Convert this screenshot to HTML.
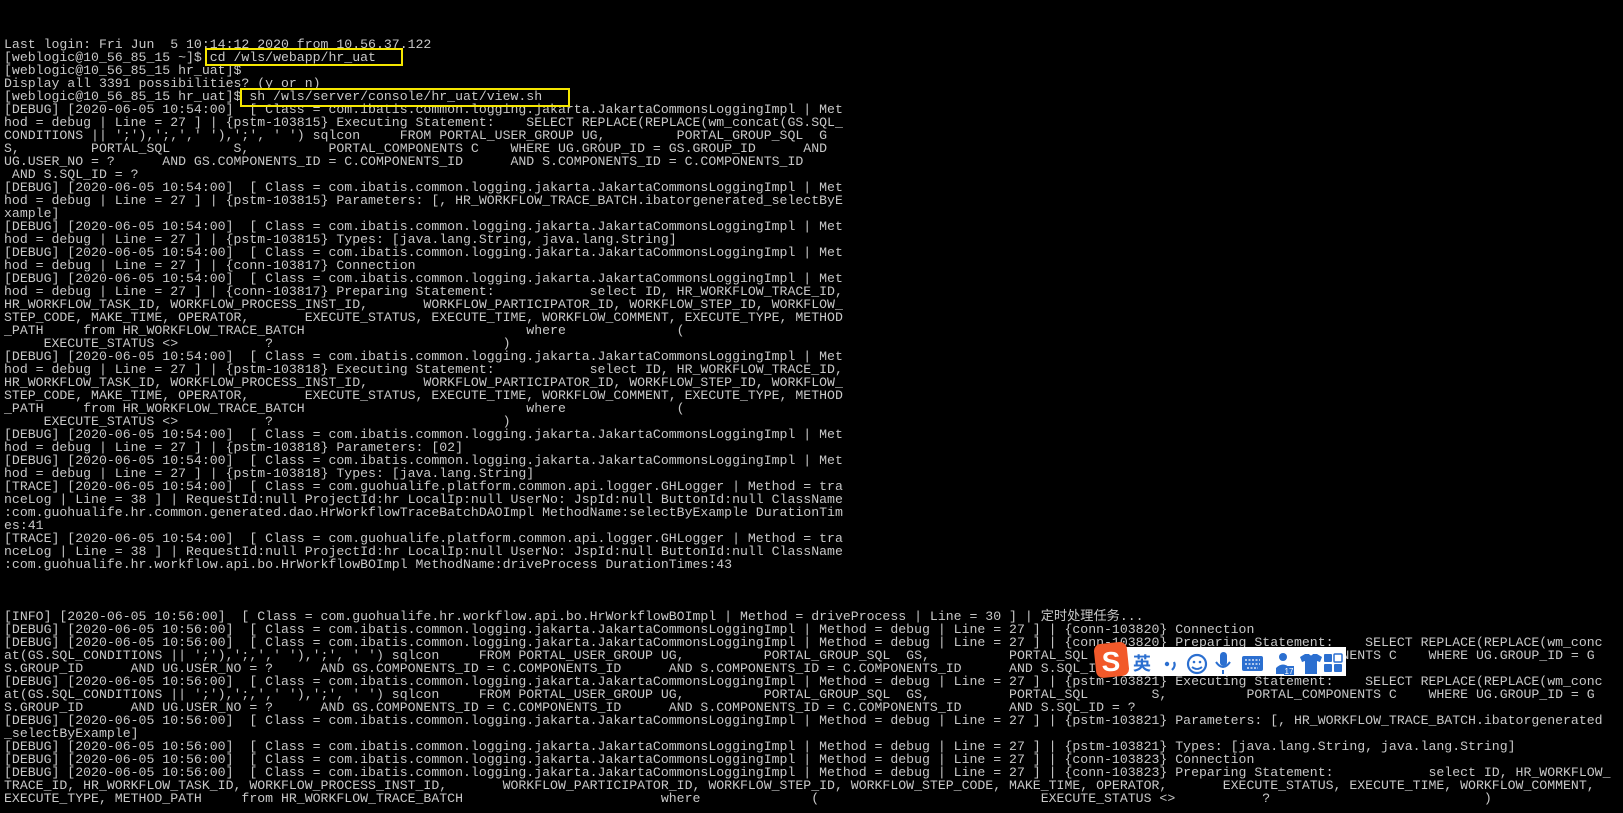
<!DOCTYPE html>
<html><head><meta charset="utf-8">
<style>
html,body{margin:0;padding:0;background:#000;width:1623px;height:813px;overflow:hidden;position:relative}
pre{position:absolute;left:4px;top:38px;margin:0;font-family:"Liberation Mono","Noto Sans CJK SC",monospace;font-size:13.2px;line-height:13px;color:#c8c8c8;white-space:pre}
.box{position:absolute;border:2px solid #f5e600;box-sizing:border-box}
.ime{position:absolute;left:1118px;top:647px;width:228px;height:29px;background:#fff}
.ic{position:absolute}
</style></head><body>
<pre>Last login: Fri Jun  5 10:14:12 2020 from 10.56.37.122
[weblogic@10_56_85_15 ~]$ cd /wls/webapp/hr_uat
[weblogic@10_56_85_15 hr_uat]$
Display all 3391 possibilities? (y or n)
[weblogic@10_56_85_15 hr_uat]$ sh /wls/server/console/hr_uat/view.sh
[DEBUG] [2020-06-05 10:54:00]  [ Class = com.ibatis.common.logging.jakarta.JakartaCommonsLoggingImpl | Met
hod = debug | Line = 27 ] | {pstm-103815} Executing Statement:    SELECT REPLACE(REPLACE(wm_concat(GS.SQL_
CONDITIONS || ';'),';,',' '),';', ' ') sqlcon     FROM PORTAL_USER_GROUP UG,         PORTAL_GROUP_SQL  G
S,         PORTAL_SQL        S,          PORTAL_COMPONENTS C    WHERE UG.GROUP_ID = GS.GROUP_ID      AND
UG.USER_NO = ?      AND GS.COMPONENTS_ID = C.COMPONENTS_ID      AND S.COMPONENTS_ID = C.COMPONENTS_ID
 AND S.SQL_ID = ?
[DEBUG] [2020-06-05 10:54:00]  [ Class = com.ibatis.common.logging.jakarta.JakartaCommonsLoggingImpl | Met
hod = debug | Line = 27 ] | {pstm-103815} Parameters: [, HR_WORKFLOW_TRACE_BATCH.ibatorgenerated_selectByE
xample]
[DEBUG] [2020-06-05 10:54:00]  [ Class = com.ibatis.common.logging.jakarta.JakartaCommonsLoggingImpl | Met
hod = debug | Line = 27 ] | {pstm-103815} Types: [java.lang.String, java.lang.String]
[DEBUG] [2020-06-05 10:54:00]  [ Class = com.ibatis.common.logging.jakarta.JakartaCommonsLoggingImpl | Met
hod = debug | Line = 27 ] | {conn-103817} Connection
[DEBUG] [2020-06-05 10:54:00]  [ Class = com.ibatis.common.logging.jakarta.JakartaCommonsLoggingImpl | Met
hod = debug | Line = 27 ] | {conn-103817} Preparing Statement:            select ID, HR_WORKFLOW_TRACE_ID,
HR_WORKFLOW_TASK_ID, WORKFLOW_PROCESS_INST_ID,       WORKFLOW_PARTICIPATOR_ID, WORKFLOW_STEP_ID, WORKFLOW_
STEP_CODE, MAKE_TIME, OPERATOR,       EXECUTE_STATUS, EXECUTE_TIME, WORKFLOW_COMMENT, EXECUTE_TYPE, METHOD
_PATH     from HR_WORKFLOW_TRACE_BATCH                            where              (
     EXECUTE_STATUS &lt;&gt;           ?                             )
[DEBUG] [2020-06-05 10:54:00]  [ Class = com.ibatis.common.logging.jakarta.JakartaCommonsLoggingImpl | Met
hod = debug | Line = 27 ] | {pstm-103818} Executing Statement:            select ID, HR_WORKFLOW_TRACE_ID,
HR_WORKFLOW_TASK_ID, WORKFLOW_PROCESS_INST_ID,       WORKFLOW_PARTICIPATOR_ID, WORKFLOW_STEP_ID, WORKFLOW_
STEP_CODE, MAKE_TIME, OPERATOR,       EXECUTE_STATUS, EXECUTE_TIME, WORKFLOW_COMMENT, EXECUTE_TYPE, METHOD
_PATH     from HR_WORKFLOW_TRACE_BATCH                            where              (
     EXECUTE_STATUS &lt;&gt;           ?                             )
[DEBUG] [2020-06-05 10:54:00]  [ Class = com.ibatis.common.logging.jakarta.JakartaCommonsLoggingImpl | Met
hod = debug | Line = 27 ] | {pstm-103818} Parameters: [02]
[DEBUG] [2020-06-05 10:54:00]  [ Class = com.ibatis.common.logging.jakarta.JakartaCommonsLoggingImpl | Met
hod = debug | Line = 27 ] | {pstm-103818} Types: [java.lang.String]
[TRACE] [2020-06-05 10:54:00]  [ Class = com.guohualife.platform.common.api.logger.GHLogger | Method = tra
nceLog | Line = 38 ] | RequestId:null ProjectId:hr LocalIp:null UserNo: JspId:null ButtonId:null ClassName
:com.guohualife.hr.common.generated.dao.HrWorkflowTraceBatchDAOImpl MethodName:selectByExample DurationTim
es:41
[TRACE] [2020-06-05 10:54:00]  [ Class = com.guohualife.platform.common.api.logger.GHLogger | Method = tra
nceLog | Line = 38 ] | RequestId:null ProjectId:hr LocalIp:null UserNo: JspId:null ButtonId:null ClassName
:com.guohualife.hr.workflow.api.bo.HrWorkflowBOImpl MethodName:driveProcess DurationTimes:43



[INFO] [2020-06-05 10:56:00]  [ Class = com.guohualife.hr.workflow.api.bo.HrWorkflowBOImpl | Method = driveProcess | Line = 30 ] | 定时处理任务...
[DEBUG] [2020-06-05 10:56:00]  [ Class = com.ibatis.common.logging.jakarta.JakartaCommonsLoggingImpl | Method = debug | Line = 27 ] | {conn-103820} Connection
[DEBUG] [2020-06-05 10:56:00]  [ Class = com.ibatis.common.logging.jakarta.JakartaCommonsLoggingImpl | Method = debug | Line = 27 ] | {conn-103820} Preparing Statement:    SELECT REPLACE(REPLACE(wm_conc
at(GS.SQL_CONDITIONS || ';'),';,',' '),';', ' ') sqlcon     FROM PORTAL_USER_GROUP UG,          PORTAL_GROUP_SQL  GS,          PORTAL_SQL        S,          PORTAL_COMPONENTS C    WHERE UG.GROUP_ID = G
S.GROUP_ID      AND UG.USER_NO = ?      AND GS.COMPONENTS_ID = C.COMPONENTS_ID      AND S.COMPONENTS_ID = C.COMPONENTS_ID      AND S.SQL_ID = ?
[DEBUG] [2020-06-05 10:56:00]  [ Class = com.ibatis.common.logging.jakarta.JakartaCommonsLoggingImpl | Method = debug | Line = 27 ] | {pstm-103821} Executing Statement:    SELECT REPLACE(REPLACE(wm_conc
at(GS.SQL_CONDITIONS || ';'),';,',' '),';', ' ') sqlcon     FROM PORTAL_USER_GROUP UG,          PORTAL_GROUP_SQL  GS,          PORTAL_SQL        S,          PORTAL_COMPONENTS C    WHERE UG.GROUP_ID = G
S.GROUP_ID      AND UG.USER_NO = ?      AND GS.COMPONENTS_ID = C.COMPONENTS_ID      AND S.COMPONENTS_ID = C.COMPONENTS_ID      AND S.SQL_ID = ?
[DEBUG] [2020-06-05 10:56:00]  [ Class = com.ibatis.common.logging.jakarta.JakartaCommonsLoggingImpl | Method = debug | Line = 27 ] | {pstm-103821} Parameters: [, HR_WORKFLOW_TRACE_BATCH.ibatorgenerated
_selectByExample]
[DEBUG] [2020-06-05 10:56:00]  [ Class = com.ibatis.common.logging.jakarta.JakartaCommonsLoggingImpl | Method = debug | Line = 27 ] | {pstm-103821} Types: [java.lang.String, java.lang.String]
[DEBUG] [2020-06-05 10:56:00]  [ Class = com.ibatis.common.logging.jakarta.JakartaCommonsLoggingImpl | Method = debug | Line = 27 ] | {conn-103823} Connection
[DEBUG] [2020-06-05 10:56:00]  [ Class = com.ibatis.common.logging.jakarta.JakartaCommonsLoggingImpl | Method = debug | Line = 27 ] | {conn-103823} Preparing Statement:            select ID, HR_WORKFLOW_
TRACE_ID, HR_WORKFLOW_TASK_ID, WORKFLOW_PROCESS_INST_ID,       WORKFLOW_PARTICIPATOR_ID, WORKFLOW_STEP_ID, WORKFLOW_STEP_CODE, MAKE_TIME, OPERATOR,       EXECUTE_STATUS, EXECUTE_TIME, WORKFLOW_COMMENT,
EXECUTE_TYPE, METHOD_PATH     from HR_WORKFLOW_TRACE_BATCH                         where              (                            EXECUTE_STATUS &lt;&gt;           ?                           )</pre>
<div class="box" style="left:205px;top:48px;width:198px;height:18px"></div>
<div class="box" style="left:240px;top:88px;width:330px;height:19px"></div>
<div class="ime"></div>
<svg class="ic" style="left:1094px;top:642px" width="260" height="40" viewBox="0 0 260 40">
<rect x="1" y="1" width="33" height="34" rx="7" fill="#f2592a" transform="rotate(-6 17 18)"/>
<text x="17" y="29" font-family="Liberation Sans,sans-serif" font-weight="bold" font-size="28" fill="#fff" text-anchor="middle">S</text>
<text x="48" y="28" font-family="Noto Sans CJK SC,sans-serif" font-weight="bold" font-size="18" fill="#2b6fd0" text-anchor="middle">英</text>
<circle cx="73" cy="22" r="2.2" fill="#2b6fd0"/><path d="M80 20 q2 4 -2 8" stroke="#2b6fd0" stroke-width="2.2" fill="none"/>
<circle cx="103" cy="22" r="9" stroke="#2b6fd0" stroke-width="2.2" fill="none"/>
<circle cx="100" cy="20" r="1.3" fill="#2b6fd0"/><circle cx="106" cy="20" r="1.3" fill="#2b6fd0"/>
<path d="M98 25 q5 4 10 0" stroke="#2b6fd0" stroke-width="1.8" fill="none"/>
<rect x="126" y="10" width="7" height="14" rx="3.5" fill="#2b6fd0"/>
<path d="M122 20 q7 10 14 0 M129 28 v4" stroke="#2b6fd0" stroke-width="2" fill="none"/>
<rect x="148" y="14" width="21" height="15" rx="2" fill="#2b6fd0"/>
<path d="M151 18h15M151 22h15M153 26h11" stroke="#fff" stroke-width="1.3" stroke-dasharray="2 1.5"/>
<circle cx="189" cy="15" r="4" fill="#2b6fd0"/><path d="M182 32 v-6 q7 -7 14 0 v6z" fill="#2b6fd0"/>
<rect x="190" y="24" width="10" height="9" fill="#2b6fd0"/><text x="195" y="32" font-size="8" font-family="Liberation Sans,sans-serif" fill="#fff" text-anchor="middle">17</text>
<path d="M206 15 l5 -3 h4 q2 3 4 0 h4 l5 3 -2 5 -3 -1 v13 h-12 v-13 l-3 1z" fill="#2b6fd0"/>
<rect x="230" y="12" width="8" height="8" rx="1" fill="#2b6fd0"/><rect x="240" y="12" width="8" height="8" rx="1" stroke="#2b6fd0" stroke-width="1.5" fill="none"/>
<rect x="230" y="22" width="8" height="8" rx="1" fill="#2b6fd0"/><rect x="240" y="22" width="8" height="8" rx="1" fill="#2b6fd0"/>
</svg>
</body></html>
